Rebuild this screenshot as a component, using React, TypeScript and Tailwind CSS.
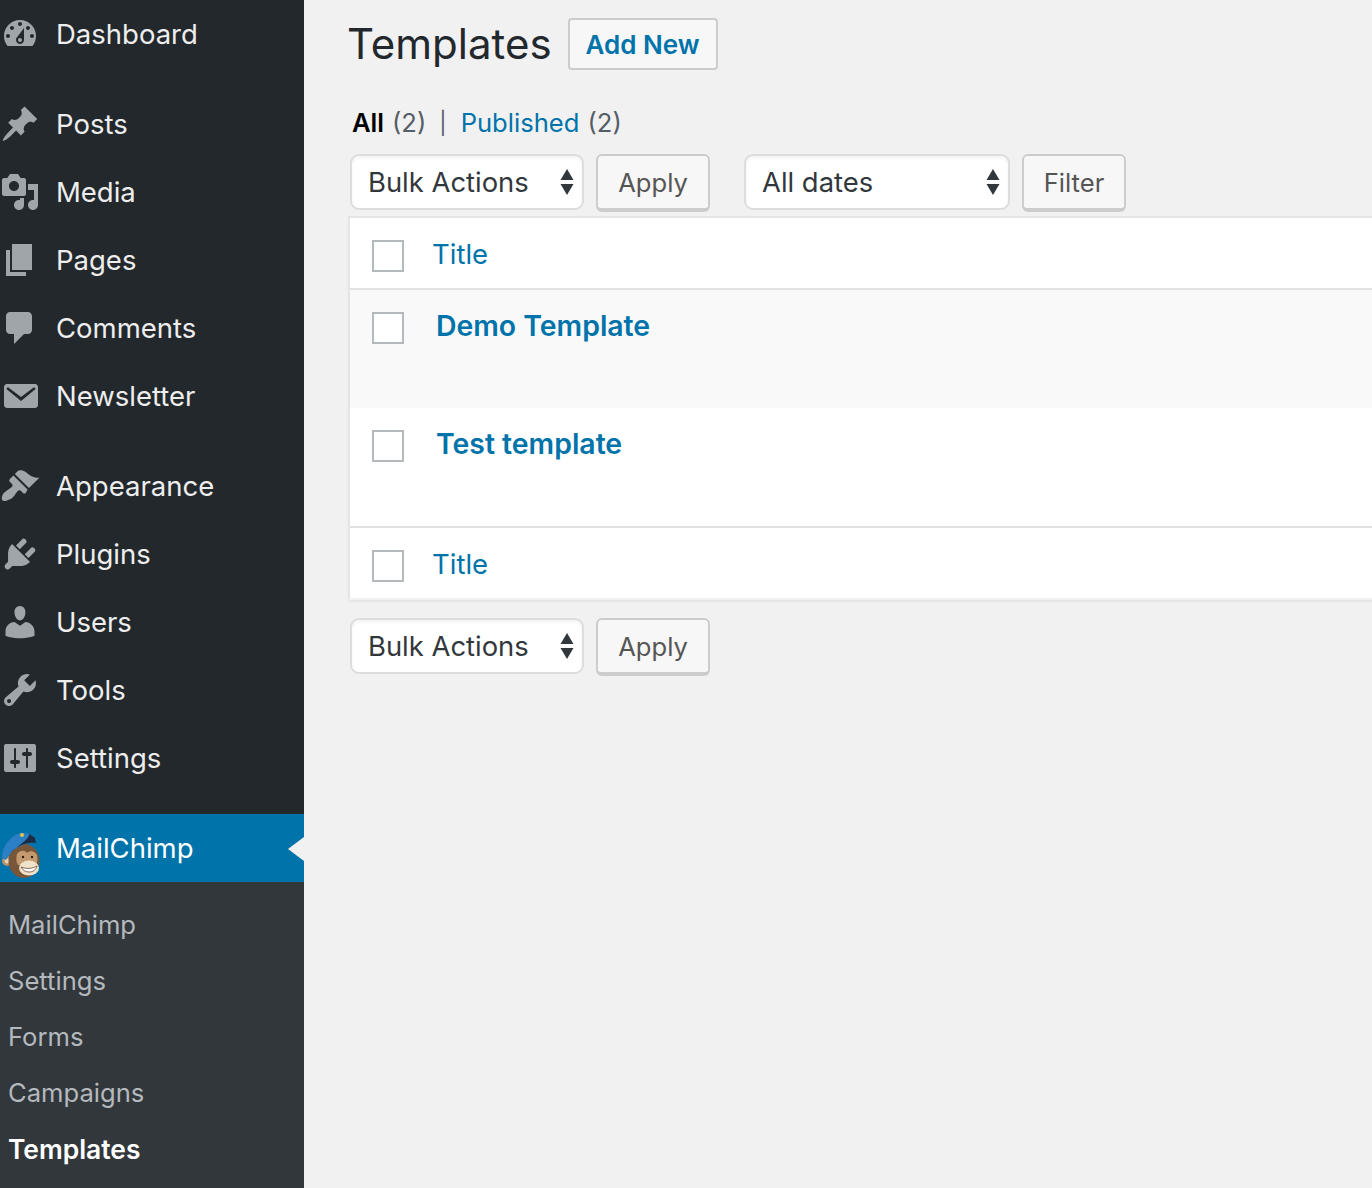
const font = "[font-family:Inter,sans-serif]";

const paths = {
  dashboard:
    "M3.76 16h12.48c1.1-1.37 1.76-3.11 1.76-5 0-4.42-3.58-8-8-8s-8 3.58-8 8c0 1.89.66 3.63 1.76 5zM10 4c.55 0 1 .45 1 1s-.45 1-1 1-1-.45-1-1 .45-1 1-1zM6 6c.55 0 1 .45 1 1s-.45 1-1 1-1-.45-1-1 .45-1 1-1zm8 0c.55 0 1 .45 1 1s-.45 1-1 1-1-.45-1-1 .45-1 1-1zm-5.37 5.55L12 7v6c0 1.1-.9 2-2 2s-2-.9-2-2c0-.57.24-1.08.63-1.45zM4 10c.55 0 1 .45 1 1s-.45 1-1 1-1-.45-1-1 .45-1 1-1zm12 0c.55 0 1 .45 1 1s-.45 1-1 1-1-.45-1-1 .45-1 1-1zm-5 3c0-.55-.45-1-1-1s-1 .45-1 1 .45 1 1 1 1-.45 1-1z",
  posts:
    "M10.44 3.02l1.82-1.82 6.36 6.35-1.83 1.82c-1.05-.68-2.48-.57-3.41.36l-.75.75c-.92.93-1.04 2.35-.35 3.41l-1.83 1.82-2.41-2.41-2.8 2.79c-.42.42-3.38 2.71-3.8 2.29s1.86-3.39 2.28-3.81l2.79-2.79L4.1 9.36l1.83-1.82c1.05.69 2.48.57 3.4-.36l.75-.75c.93-.92 1.05-2.35.36-3.41z",
  media:
    "M13 11V4c0-.55-.45-1-1-1h-1.67L9 1H5L3.67 3H2c-.55 0-1 .45-1 1v7c0 .55.45 1 1 1h10c.55 0 1-.45 1-1zM7 4.500c1.38 0 2.500 1.120 2.500 2.500S8.380 9.500 7 9.500 4.500 8.380 4.500 7 5.620 4.500 7 4.500zM14 6h5v10.500c0 1.380-1.120 2.500-2.500 2.500S14 17.880 14 16.500s1.120-2.500 2.500-2.500c.17 0 .34.02.5.05V9h-3V6zm-4 8.050V13h2v3.500c0 1.380-1.120 2.500-2.500 2.500S7 17.880 7 16.500 8.120 14 9.500 14c.17 0 .34.02.5.05z",
  pages: "M6 15V2h10v13H6zm-1 1h8v2H3V5h2v11z",
  comments: "M5 2h9c1.1 0 2 .9 2 2v7c0 1.1-.9 2-2 2h-2l-5 5v-5H5c-1.1 0-2-.9-2-2V4c0-1.1.9-2 2-2z",
  email:
    "M3.500 4h14c.83 0 1.500.67 1.500 1.500v9c0 .83-.67 1.500-1.500 1.500h-14C2.670 16 2 15.330 2 14.500v-9C2 4.670 2.670 4 3.500 4zM4.200 5.800l6.300 4.700 6.300-4.700c.6-.4 1.300.4.700 1l-7 5.700-7-5.700c-.6-.6.100-1.400.700-1z",
  appearance:
    "M14.48 11.06L7.41 3.99l1.5-1.5c.5-.56 2.3-.47 3.51.32 1.21.8 1.43 1.28 2.91 2.1 1.18.64 2.45 1.26 4.45.85zm-.71.71L6.7 4.7 4.93 6.47c-.39.39-.39 1.02 0 1.41l1.06 1.06c.39.39.39 1.03 0 1.42-.6.6-1.43 1.11-2.21 1.69-.35.26-.7.53-1.01.84C1.43 13.23.4 16.37 1.2 17.17c.8.8 3.94-.23 5.28-1.57.31-.31.58-.66.84-1.01.58-.78 1.09-1.61 1.69-2.21.39-.39 1.02-.39 1.41 0l1.06 1.06c.39.39 1.02.39 1.41 0z",
  plugins:
    "M13.11 4.36L9.87 7.6 8 5.73l3.24-3.24c.35-.34 1.05-.2 1.56.32.52.51.66 1.21.31 1.55zm-8 1.77l.91-1.12 9.01 9.01-1.19.84c-.71.71-2.63 1.16-3.82 1.16H6.14L4.9 17.26c-.59.59-1.54.59-2.12 0-.59-.58-.59-1.53 0-2.12l1.24-1.24v-3.88c0-1.13.4-3.19 1.09-3.89zm7.26 3.97l3.24-3.24c.34-.35 1.04-.21 1.55.31.52.51.66 1.21.31 1.55l-3.24 3.25z",
  users:
    "M10 9.25c-2.27 0-2.73-3.44-2.73-3.44C7 4.02 7.82 2 9.97 2c2.16 0 2.98 2.02 2.71 3.81 0 0-.41 3.44-2.68 3.44zm0 2.57L12.72 10c2.39 0 4.52 2.33 4.52 4.53v2.49s-3.65 1.13-7.24 1.13c-3.65 0-7.24-1.13-7.24-1.13v-2.49c0-2.25 1.94-4.48 4.47-4.48z",
  tools:
    "M16.68 9.77c-1.34 1.34-3.3 1.67-4.95.99l-5.41 6.52c-.99.99-2.59.99-3.58 0s-.99-2.59 0-3.57l6.52-5.42c-.68-1.65-.35-3.61.99-4.95 1.28-1.28 3.12-1.62 4.72-1.06l-2.89 2.89 2.82 2.82 2.86-2.87c.53 1.58.18 3.39-1.08 4.65zM3.81 16.21c.4.39 1.04.39 1.43 0 .4-.4.4-1.04 0-1.43-.39-.4-1.03-.4-1.43 0-.39.39-.39 1.03 0 1.43z",
  settings:
    "M18 16V4c0-.55-.45-1-1-1H3c-.55 0-1 .45-1 1v12c0 .55.45 1 1 1h14c.55 0 1-.45 1-1zM8 11h1c.55 0 1 .45 1 1s-.45 1-1 1H8v1.5c0 .28-.22.5-.5.5s-.5-.22-.5-.5V13H6c-.55 0-1-.45-1-1s.45-1 1-1h1V5.5c0-.28.22-.5.5-.5s.5.22.5.5V11zm5-2h-1c-.55 0-1-.45-1-1s.45-1 1-1h1V5.5c0-.28.22-.5.5-.5s.5.22.5.5V7h1c.55 0 1 .45 1 1s-.45 1-1 1h-1v5.5c0 .28-.22.5-.5.5s-.5-.22-.5-.5V9z",
};

const menuGroups: { label: string; icon: keyof typeof paths }[][] = [
  [{ label: "Dashboard", icon: "dashboard" }],
  [
    { label: "Posts", icon: "posts" },
    { label: "Media", icon: "media" },
    { label: "Pages", icon: "pages" },
    { label: "Comments", icon: "comments" },
    { label: "Newsletter", icon: "email" },
  ],
  [
    { label: "Appearance", icon: "appearance" },
    { label: "Plugins", icon: "plugins" },
    { label: "Users", icon: "users" },
    { label: "Tools", icon: "tools" },
    { label: "Settings", icon: "settings" },
  ],
];

const subMenu = ["MailChimp", "Settings", "Forms", "Campaigns"];

function MenuIcon({ name }: { name: keyof typeof paths }) {
  return (
    <svg viewBox="0 0 20 20" fillRule="evenodd" className="h-10 w-10 shrink-0 fill-[#a0a5aa]">
      <path d={paths[name]} />
    </svg>
  );
}

function ChimpLogo() {
  return (
    <svg viewBox="0 0 42 60" className="h-[60px] w-[42px] shrink-0">
      <circle cx="7" cy="43" r="5" fill="#b98f68" />
      <circle cx="7" cy="43" r="2.400" fill="#e8d3b6" />
      <ellipse cx="24" cy="43" rx="15.500" ry="17" fill="#7a5638" />
      <path d="M17 36c3-4 8-4 10-1 3-3 8-2 10 2 1 4 0 8-1 10H18c-2-3-2-7-1-11z" fill="#c39a70" />
      <ellipse cx="29" cy="50" rx="10" ry="7.500" fill="#efe2c8" />
      <path d="M21 49c5 2 11 2 16-1-1 4-4 6-8 6s-6-2-8-5z" fill="#fff" stroke="#6d4a33" strokeWidth=".8" />
      <circle cx="23" cy="39" r="1.200" fill="#2b1c12" />
      <circle cx="32" cy="39" r="1.200" fill="#2b1c12" />
      <path d="M2 38c1-10 8-20 18-23 6-1 11 1 15 5l1 5C24 24 12 30 6 42c-2-1-4-2-4-4z" fill="#2b7fc4" />
      <path d="M10 35C17 28 26 24 36 25l-1-5c-2-2-4-3-6-4 1 4-6 8-19 19z" fill="#1c2c44" />
      <circle cx="22" cy="17" r="2" fill="#e3c24a" />
    </svg>
  );
}

function Sidebar() {
  return (
    <aside className="flex w-[304px] shrink-0 flex-col bg-[#23282d] text-[27.5px] leading-[40px] text-[#eeeeee]">
      {menuGroups.map((group) => (
        <div key={group[0].label} className="mb-[22px]">
          {group.map((item) => (
            <a key={item.label} className="flex h-[68px] items-center gap-[16px]">
              <MenuIcon name={item.icon} />
              <span>{item.label}</span>
            </a>
          ))}
        </div>
      ))}
      <a className="relative flex h-[68px] items-center gap-[14px] bg-[#0073aa] text-white">
        <ChimpLogo />
        <span>MailChimp</span>
        <span className="absolute right-0 top-[23px] border-y-[12px] border-r-[16px] border-y-transparent border-r-[#f1f1f1]" />
      </a>
      <nav className="flex flex-1 flex-col bg-[#32373c] pt-[15px] text-[25.6px] text-[#b4b9be]">
        {subMenu.map((label) => (
          <a key={label} className="flex h-[56px] items-center pl-[8px]">
            {label}
          </a>
        ))}
        <a className="flex h-[56px] items-center pl-[8px] text-[26.4px] font-semibold text-white">Templates</a>
      </nav>
    </aside>
  );
}

function SelectBox({ label, width }: { label: string; width: string }) {
  return (
    <div
      className={`${width} flex h-[56px] items-center justify-between rounded-[9px] border-2 border-[#dddddd] bg-white pl-[16px] pr-[8px] text-[27.4px] text-[#32373c] shadow-[inset_0_2px_3px_rgba(0,0,0,0.05)]`}
    >
      <span>{label}</span>
      <svg viewBox="0 0 14 26" className="h-[26px] w-[14px] fill-[#32373c]">
        <path d="M7 0l6.500 11H.5zM.5 15h13L7 26z" />
      </svg>
    </div>
  );
}

function ActionButton({ label, width }: { label: string; width: string }) {
  return (
    <button
      type="button"
      className={`${width} h-[58px] rounded-[6px] border-2 border-b-[4px] border-[#cccccc] bg-[#f7f7f7] pt-[1px] text-center text-[25.6px] text-[#555555]`}
    >
      {label}
    </button>
  );
}

function Checkbox() {
  return <div className="h-8 w-8 shrink-0 border-2 border-[#b4b9be] bg-white" />;
}

function TitleRow({ className }: { className: string }) {
  return (
    <div className={`flex h-[70px] items-center gap-[28px] bg-white pl-[22px] text-[27.500px] text-[#0073aa] ${className}`}>
      <div className="mt-[5px]">
        <Checkbox />
      </div>
      <a className="mt-[2px]">Title</a>
    </div>
  );
}

function TemplateRow({ title, className }: { title: string; className: string }) {
  return (
    <div className={`flex h-[118px] items-start gap-[32px] pl-[22px] pt-[22px] ${className}`}>
      <Checkbox />
      <a className="-mt-[6px] text-[28.4px] font-semibold text-[#0073aa]">{title}</a>
    </div>
  );
}

function Main() {
  return (
    <main className="min-w-0 flex-1 overflow-hidden pl-[45px] pt-[18px] text-[28px] leading-[40px]">
      <div className="flex h-[52px] items-center gap-[16px]">
        <h1 className="-ml-[2px] text-[42px] leading-[52px] text-[#23282d]">Templates</h1>
        <button
          type="button"
          className="h-[52px] w-[150px] rounded-[4px] border-2 border-[#cccccc] bg-[#f7f7f7] pt-[1px] text-[26px] font-semibold text-[#0073aa]"
        >
          Add New
        </button>
      </div>

      <div className="mt-[33px] flex h-[40px] items-center pl-[3px] text-[25.6px] text-[#555d66]">
        <span className="font-semibold text-black">All</span>
        <span className="ml-[8px]">(2)</span>
        <span className="ml-[13px] text-[22px]">|</span>
        <a className="ml-[14px] text-[#0073aa]">Published</a>
        <span className="ml-[8px]">(2)</span>
      </div>

      <div className="mt-[11px] flex h-[62px] items-start pl-[1px]">
        <SelectBox label="Bulk Actions" width="w-[234px]" />
        <div className="ml-[12px]">
          <ActionButton label="Apply" width="w-[114px]" />
        </div>
        <div className="ml-[34px]">
          <SelectBox label="All dates" width="w-[266px]" />
        </div>
        <div className="ml-[12px]">
          <ActionButton label="Filter" width="w-[104px]" />
        </div>
      </div>

      <div className="-ml-px w-[1100px] border-y-2 border-l-2 border-[#e5e5e5] border-b-transparent shadow-[0_2px_2px_rgba(0,0,0,0.05)]">
        <TitleRow className="box-content border-b-2 border-[#e1e1e1]" />
        <TemplateRow title="Demo Template" className="bg-[#f9f9f9]" />
        <TemplateRow title="Test template" className="bg-white" />
        <TitleRow className="box-content border-t-2 border-[#e1e1e1]" />
      </div>

      <div className="mt-[18px] flex items-start pl-[1px]">
        <SelectBox label="Bulk Actions" width="w-[234px]" />
        <div className="ml-[12px]">
          <ActionButton label="Apply" width="w-[114px]" />
        </div>
      </div>
    </main>
  );
}

export default function App() {
  return (
    <div className={`flex h-screen w-full overflow-hidden bg-[#f1f1f1] ${font}`}>
      <Sidebar />
      <Main />
    </div>
  );
}
